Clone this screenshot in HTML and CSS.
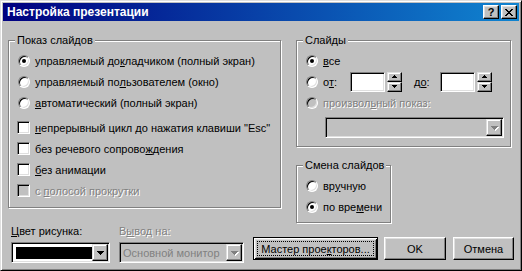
FILE: index.html
```html
<!DOCTYPE html>
<html lang="ru">
<head>
  <meta charset="UTF-8">
  <meta name="viewport" content="width=device-width, initial-scale=1.0">
  <title>Настройка презентации</title>
  <link rel="stylesheet" href="styles.css">
</head>
<body>
  <div class="window">
    <div class="titlebar">
      <span class="title">Настройка презентации</span>
      <div class="title-buttons">
        <button class="title-btn">?</button>
        <button class="title-btn">
          <svg width="8" height="7" viewBox="0 0 8 7" shape-rendering="crispEdges"><path d="M0 0h2v1h-2zM6 0h2v1h-2zM1 1h2v1h-2zM5 1h2v1h-2zM2 2h4v1h-4zM3 3h2v1h-2zM2 4h4v1h-4zM1 5h2v1h-2zM5 5h2v1h-2zM0 6h2v1h-2zM6 6h2v1h-2z"/></svg>
        </button>
      </div>
    </div>

    <div class="dialog">
      <div class="top">
        <fieldset class="group show-type">
          <legend>Показ слайдов</legend>
          <div class="option"><span class="mark"><span class="radio checked"></span></span>управляемый до<u>к</u>ладчиком (полный экран)</div>
          <div class="option"><span class="mark"><span class="radio"></span></span>управляемый по<u>л</u>ьзователем (окно)</div>
          <div class="option"><span class="mark"><span class="radio"></span></span><u>а</u>втоматический (полный экран)</div>
          <div class="checks">
            <div class="option"><span class="mark"><span class="check"></span></span><u>н</u>епрерывный цикл до нажатия клавиши "Esc"</div>
            <div class="option"><span class="mark"><span class="check"></span></span>без речевого сопрово<u>ж</u>дения</div>
            <div class="option"><span class="mark"><span class="check"></span></span><u>б</u>ез анимации</div>
            <div class="option disabled"><span class="mark"><span class="check"></span></span>с&nbsp;<u>п</u>олосой прокрутки</div>
          </div>
        </fieldset>

        <div class="side">
          <fieldset class="group slides">
            <legend>Слайды</legend>
            <div class="option"><span class="mark"><span class="radio checked"></span></span><u>в</u>се</div>
            <div class="option">
              <span class="mark"><span class="radio"></span></span>
              <span class="range-label">о<u>т</u>:</span>
              <span class="edit"></span>
              <span class="spin">
                <span class="spin-btn"><svg width="5" height="3" viewBox="0 0 5 3" shape-rendering="crispEdges"><path d="M2 0h1v1h-1zM1 1h3v1h-3zM0 2h5v1h-5z"/></svg></span>
                <span class="spin-btn"><svg width="5" height="3" viewBox="0 0 5 3" shape-rendering="crispEdges"><path d="M0 0h5v1h-5zM1 1h3v1h-3zM2 2h1v1h-1z"/></svg></span>
              </span>
              <span class="range-label to">д<u>о</u>:</span>
              <span class="edit"></span>
              <span class="spin">
                <span class="spin-btn"><svg width="5" height="3" viewBox="0 0 5 3" shape-rendering="crispEdges"><path d="M2 0h1v1h-1zM1 1h3v1h-3zM0 2h5v1h-5z"/></svg></span>
                <span class="spin-btn"><svg width="5" height="3" viewBox="0 0 5 3" shape-rendering="crispEdges"><path d="M0 0h5v1h-5zM1 1h3v1h-3zM2 2h1v1h-1z"/></svg></span>
              </span>
            </div>
            <div class="option disabled"><span class="mark"><span class="radio"></span></span>произвол<u>ь</u>ный показ:</div>
            <div class="combo custom-show disabled">
              <span class="combo-text"></span>
              <span class="drop"><svg width="7" height="4" viewBox="0 0 7 4" shape-rendering="crispEdges"><path d="M0 0h7v1h-7zM1 1h5v1h-5zM2 2h3v1h-3zM3 3h1v1h-1z"/></svg></span>
            </div>
          </fieldset>

          <fieldset class="group advance">
            <legend>Смена слайдов</legend>
            <div class="option"><span class="mark"><span class="radio"></span></span>вр<u>у</u>чную</div>
            <div class="option"><span class="mark"><span class="radio checked"></span></span>по вре<u>м</u>ени</div>
          </fieldset>
        </div>
      </div>

      <div class="bottom">
        <div class="field pen-color">
          <div class="field-label"><u>Ц</u>вет рисунка:</div>
          <div class="combo">
            <span class="combo-text"><span class="swatch"></span></span>
            <span class="drop"><svg width="7" height="4" viewBox="0 0 7 4" shape-rendering="crispEdges"><path d="M0 0h7v1h-7zM1 1h5v1h-5zM2 2h3v1h-3zM3 3h1v1h-1z"/></svg></span>
          </div>
        </div>
        <div class="field monitor">
          <div class="field-label disabled">В<u>ы</u>вод на:</div>
          <div class="combo disabled">
            <span class="combo-text">Основной монитор</span>
            <span class="drop"><svg width="7" height="4" viewBox="0 0 7 4" shape-rendering="crispEdges"><path d="M0 0h7v1h-7zM1 1h5v1h-5zM2 2h3v1h-3zM3 3h1v1h-1z"/></svg></span>
          </div>
        </div>
        <div class="buttons">
          <button class="btn default wizard"><span class="focus">Мастер прое<u>к</u>торов...</span></button>
          <button class="btn ok">OK</button>
          <button class="btn cancel">Отмена</button>
        </div>
      </div>
    </div>
  </div>
</body>
</html>
```

FILE: styles.css
```css
* {
  box-sizing: border-box;
}

body {
  margin: 0;
  background: #c0c0c0;
  font-family: "Liberation Sans", Arial, sans-serif;
  font-size: 11px;
  color: #000;
}

button {
  font: inherit;
  color: inherit;
  margin: 0;
}

u {
  text-decoration-thickness: 1px;
  text-underline-offset: 1px;
}

/* window frame */

.window {
  width: 522px;
  height: 271px;
  padding: 2px;
  background: #c0c0c0;
  border: 1px solid;
  border-color: #dfdfdf #000 #000 #dfdfdf;
  box-shadow: inset 1px 1px 0 #fff, inset -1px -1px 0 #808080;
  overflow: hidden;
}

.titlebar {
  display: flex;
  align-items: center;
  height: 18px;
  padding: 0 2px 0 4px;
  background: linear-gradient(to right, #000080, #1084d0);
  color: #fff;
}

.title {
  flex: 1;
  font-weight: bold;
  font-size: 12px;
  line-height: 18px;
}

.title-buttons {
  display: flex;
  gap: 2px;
}

.title-btn {
  display: flex;
  align-items: center;
  justify-content: center;
  width: 16px;
  height: 14px;
  padding: 0;
  background: #c0c0c0;
  border: 1px solid;
  border-color: #fff #000 #000 #fff;
  box-shadow: inset -1px -1px 0 #808080, inset 1px 1px 0 #dfdfdf;
  color: #000;
  font-weight: bold;
  font-size: 11px;
  line-height: 12px;
}

/* dialog body */

.dialog {
  padding: 13px 5px 0 5px;
}

.top {
  display: flex;
  gap: 15px;
  align-items: flex-start;
}

.group {
  margin: 0;
  min-width: 0;
  padding: 3px 8px 6px 8px;
  border: 1px solid #808080;
  box-shadow: inset 1px 1px 0 #fff, 1px 1px 0 #fff;
}

.group legend {
  padding: 0 2px;
  margin-left: -2px;
  line-height: 13px;
  white-space: nowrap;
  background: #c0c0c0;
}

.show-type {
  width: 273px;
}

.checks {
  margin-top: 4px;
}

.side {
  display: flex;
  flex-direction: column;
  width: 215px;
}

.slides {
  width: 215px;
  padding-bottom: 8px;
}

.advance {
  width: 95px;
  margin-top: 12px;
  padding-right: 2px;
  padding-bottom: 5px;
}

.option {
  display: flex;
  align-items: center;
  height: 21px;
  white-space: nowrap;
}

.mark {
  display: flex;
  width: 13px;
  margin-right: 5px;
}

.disabled {
  color: #808080;
  text-shadow: 1px 1px 0 #fff;
}

/* radio and check marks */

.radio {
  display: flex;
  align-items: center;
  justify-content: center;
  width: 12px;
  height: 12px;
  margin-left: 1px;
  border-radius: 50%;
  border: 1px solid;
  border-color: #808080 #fff #fff #808080;
  background: #fff;
  box-shadow: inset 1px 1px 0 #000, inset -1px -1px 0 #dfdfdf;
}

.radio.checked::after {
  content: "";
  width: 4px;
  height: 4px;
  border-radius: 50%;
  background: #000;
}

.check {
  width: 13px;
  height: 13px;
  border: 1px solid;
  border-color: #808080 #fff #fff #808080;
  background: #fff;
  box-shadow: inset 1px 1px 0 #000, inset -1px -1px 0 #dfdfdf;
}

.disabled .radio,
.disabled .check {
  background: #c0c0c0;
}

/* slide range */

.range-label {
  width: 27px;
}

.range-label.to {
  width: 26px;
  margin-left: 12px;
}

.edit {
  width: 35px;
  height: 20px;
  border: 1px solid;
  border-color: #808080 #fff #fff #808080;
  background: #fff;
  box-shadow: inset 1px 1px 0 #000, inset -1px -1px 0 #dfdfdf;
}

.spin {
  display: flex;
  flex-direction: column;
  width: 15px;
  height: 20px;
  margin-left: 2px;
}

.spin-btn {
  display: flex;
  align-items: center;
  justify-content: center;
  height: 10px;
  background: #c0c0c0;
  border: 1px solid;
  border-color: #dfdfdf #000 #000 #dfdfdf;
  box-shadow: inset -1px -1px 0 #808080, inset 1px 1px 0 #fff;
}

/* combo boxes */

.combo {
  display: flex;
  height: 21px;
  padding: 1px;
  border: 1px solid;
  border-color: #808080 #fff #fff #808080;
  background: #fff;
  box-shadow: inset 1px 1px 0 #000, inset -1px -1px 0 #dfdfdf;
}

.combo.disabled {
  background: #c0c0c0;
  text-shadow: none;
}

.combo-text {
  display: flex;
  align-items: center;
  flex: 1;
  padding-left: 2px;
  white-space: nowrap;
  overflow: hidden;
}

.drop {
  display: flex;
  align-items: center;
  justify-content: center;
  width: 16px;
  height: 17px;
  background: #c0c0c0;
  border: 1px solid;
  border-color: #dfdfdf #000 #000 #dfdfdf;
  box-shadow: inset -1px -1px 0 #808080, inset 1px 1px 0 #fff;
}

.combo.disabled .drop svg {
  fill: #808080;
  filter: drop-shadow(1px 1px 0 #fff);
}

.custom-show {
  width: 179px;
  margin-left: 20px;
  margin-top: 4px;
}

.swatch {
  width: 76px;
  height: 12px;
  margin-left: 1px;
  background: #000;
}

/* bottom row */

.bottom {
  display: flex;
  align-items: flex-start;
  margin-top: 2px;
  padding-left: 3px;
}

.field-label {
  line-height: 13px;
  margin-bottom: 4px;
}

.pen-color {
  width: 100px;
}

.monitor {
  width: 127px;
  margin-left: 9px;
}

.pen-color .combo,
.monitor .combo {
  width: 100%;
}

.buttons {
  display: flex;
  gap: 7px;
  margin-left: 9px;
  margin-top: 12px;
}

.btn {
  height: 23px;
  padding: 3px;
  background: #c0c0c0;
  border: 1px solid;
  border-color: #fff #000 #000 #fff;
  box-shadow: inset -1px -1px 0 #808080, inset 1px 1px 0 #dfdfdf;
}

.btn.default {
  border-color: #000;
  box-shadow: inset 1px 1px 0 #fff, inset -1px -1px 0 #000, inset 2px 2px 0 #dfdfdf, inset -2px -2px 0 #808080;
}

.focus {
  display: flex;
  align-items: center;
  justify-content: center;
  height: 100%;
  border: 1px dotted #000;
}

.wizard {
  width: 125px;
  margin-right: -1px;
}

.ok {
  width: 62px;
}

.cancel {
  width: 61px;
}
```
